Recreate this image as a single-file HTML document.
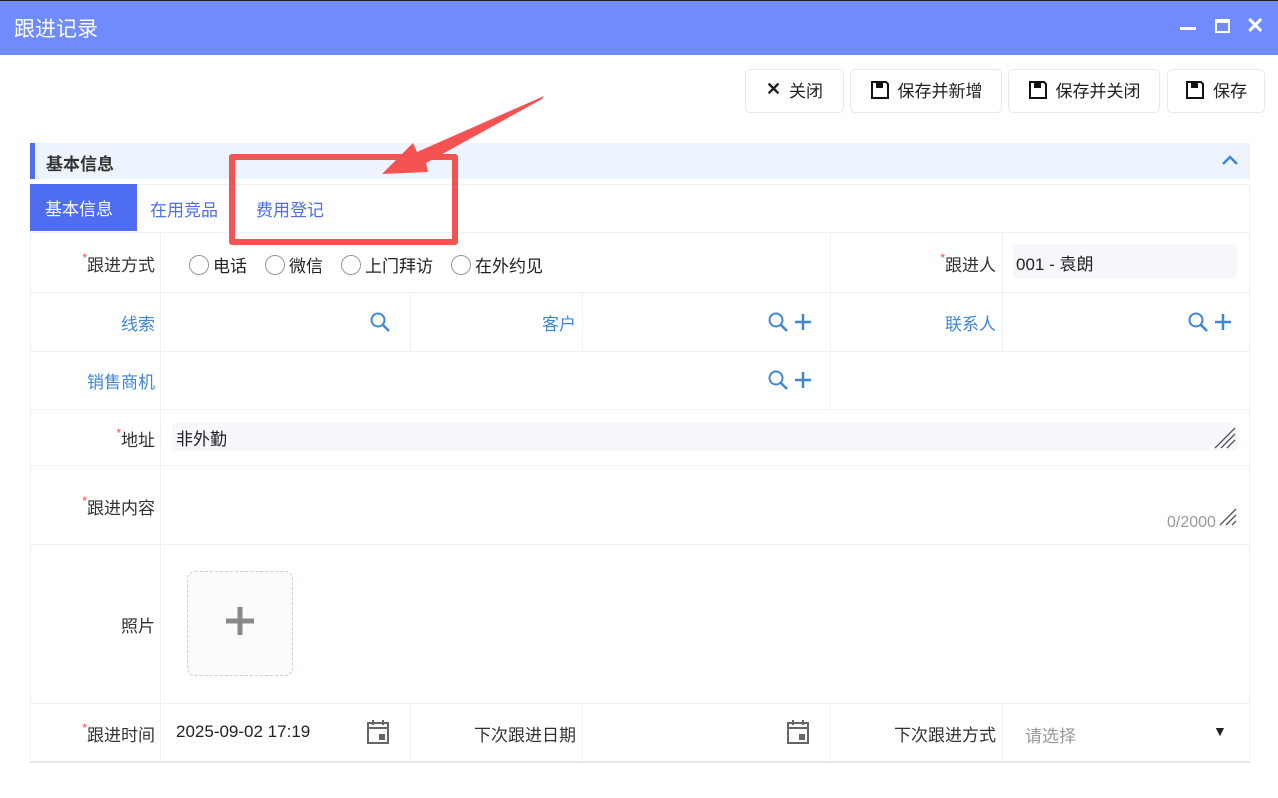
<!DOCTYPE html>
<html><head><meta charset="utf-8"><style>
*{box-sizing:border-box;margin:0;padding:0}
body{width:1278px;height:798px;background:#fff;font-family:"Liberation Sans","Noto Sans CJK SC",sans-serif;position:relative;overflow:hidden;font-size:16px;color:#222}
.abs{position:absolute}
.title{left:0;top:0;width:1278px;height:55px;background:#6f8bfc;border-top:1px solid #222}
.btn{top:69px;height:44px;border:1px solid #e6e9ef;border-radius:5px;display:flex;align-items:center;justify-content:center;gap:8px;font-size:17px;color:#222;padding-bottom:3px}
.lbl{font-size:17px;color:#333;text-align:right}
.blue{color:#3f86d8}
.star{color:#f44;font-size:12px;vertical-align:top}
.hl{background:#eef1f8;height:1px}
.vl{background:#eef1f8;width:1px}
</style></head><body>
<div class="abs title"><div class="abs" style="left:14px;top:12px;color:#fff;font-size:21px">跟进记录</div>
<div class="abs" style="left:1180px;top:26px;width:16px;height:3px;background:#fff"></div>
<div class="abs" style="left:1215px;top:18px;width:15px;height:14px;border:2px solid #fff;border-top-width:4px"></div>
<div class="abs" style="left:1246px;top:12px;color:#fff;font-size:22px;font-weight:bold">✕</div></div>

<div class="abs btn" style="left:745px;width:99px"><b style="font-size:18px">✕</b>关闭</div>
<div class="abs btn" style="left:850px;width:152px"><svg width="20" height="20" viewBox="0 0 20 20"><path d="M2 2h14l2 2v14H2z" fill="none" stroke="#111" stroke-width="2"/><rect x="6" y="2" width="7" height="6" fill="#111"/></svg>保存并新增</div>
<div class="abs btn" style="left:1008px;width:152px"><svg width="20" height="20" viewBox="0 0 20 20"><path d="M2 2h14l2 2v14H2z" fill="none" stroke="#111" stroke-width="2"/><rect x="6" y="2" width="7" height="6" fill="#111"/></svg>保存并关闭</div>
<div class="abs btn" style="left:1167px;width:98px"><svg width="20" height="20" viewBox="0 0 20 20"><path d="M2 2h14l2 2v14H2z" fill="none" stroke="#111" stroke-width="2"/><rect x="6" y="2" width="7" height="6" fill="#111"/></svg>保存</div>

<div class="abs" style="left:30px;top:143px;width:1220px;height:36px;background:#eef4fe;border-left:5px solid #4f6ef0"></div>
<div class="abs" style="left:46px;top:150px;font-weight:bold;font-size:17px;color:#333">基本信息</div>
<svg class="abs" style="left:1220px;top:153px" width="20" height="14"><path d="M3 11l7-7 7 7" fill="none" stroke="#3f86d8" stroke-width="2.5"/></svg>

<div class="abs" style="left:30px;top:184px;width:1220px;height:579px;border:1px solid #eef1f8;border-bottom:2px solid #e3e6ec"></div>
<div class="abs" style="left:30px;top:184px;width:107px;height:47px;background:#4e6df0;color:#fff;font-size:17px;padding:11px 0 0 15px">基本信息</div>
<div class="abs" style="left:150px;top:196px;color:#4e6df0;font-size:17px">在用竞品</div>
<div class="abs" style="left:256px;top:196px;color:#4e6df0;font-size:17px">费用登记</div>

<div class="abs hl" style="left:30px;top:232px;width:1220px"></div>
<div class="abs hl" style="left:30px;top:292px;width:1220px"></div>
<div class="abs hl" style="left:30px;top:351px;width:1220px"></div>
<div class="abs hl" style="left:30px;top:409px;width:1220px"></div>
<div class="abs hl" style="left:30px;top:465px;width:1220px"></div>
<div class="abs hl" style="left:30px;top:544px;width:1220px"></div>
<div class="abs hl" style="left:30px;top:703px;width:1220px"></div>
<div class="abs vl" style="left:160px;top:232px;height:530px"></div>
<div class="abs vl" style="left:830px;top:232px;height:177px"></div>
<div class="abs vl" style="left:1002px;top:232px;height:119px"></div>
<div class="abs vl" style="left:410px;top:292px;height:59px"></div>
<div class="abs vl" style="left:582px;top:292px;height:59px"></div>
<div class="abs vl" style="left:410px;top:703px;height:59px"></div>
<div class="abs vl" style="left:582px;top:703px;height:59px"></div>
<div class="abs vl" style="left:830px;top:703px;height:59px"></div>
<div class="abs vl" style="left:1002px;top:703px;height:59px"></div>

<div class="abs lbl" style="left:30px;top:251px;width:125px"><span class="star">*</span>跟进方式</div>
<div class="abs" style="left:189px;top:252px;display:flex;gap:4px;font-size:17px;align-items:center">
<span style="width:20px;height:20px;border:1px solid #999;border-radius:50%"></span>电话<span style="width:20px;height:20px;border:1px solid #999;border-radius:50%;margin-left:14px"></span>微信<span style="width:20px;height:20px;border:1px solid #999;border-radius:50%;margin-left:14px"></span>上门拜访<span style="width:20px;height:20px;border:1px solid #999;border-radius:50%;margin-left:14px"></span>在外约见</div>
<div class="abs lbl" style="left:830px;top:251px;width:166px"><span class="star">*</span>跟进人</div>
<div class="abs" style="left:1013px;top:244px;width:224px;height:35px;background:#f6f7fb;border-radius:5px;padding:6px 0 0 3px;font-size:17px">001 - 袁朗</div>

<div class="abs lbl blue" style="left:30px;top:310px;width:125px">线索</div>
<div class="abs lbl blue" style="left:410px;top:310px;width:166px">客户</div>
<div class="abs lbl blue" style="left:830px;top:310px;width:166px">联系人</div>
<div class="abs lbl blue" style="left:30px;top:368px;width:125px">销售商机</div>
<svg class="abs" style="left:369px;top:311px" width="22" height="22"><circle cx="9" cy="9" r="6.5" fill="none" stroke="#3f86d8" stroke-width="2"/><path d="M14 14l6 6" stroke="#3f86d8" stroke-width="2.5"/></svg>
<svg class="abs" style="left:767px;top:311px" width="46" height="22"><circle cx="9" cy="9" r="6.5" fill="none" stroke="#3f86d8" stroke-width="2"/><path d="M14 14l6 6M36 3v16M28 11h16" stroke="#3f86d8" stroke-width="2.5"/></svg>
<svg class="abs" style="left:1187px;top:311px" width="46" height="22"><circle cx="9" cy="9" r="6.5" fill="none" stroke="#3f86d8" stroke-width="2"/><path d="M14 14l6 6M36 3v16M28 11h16" stroke="#3f86d8" stroke-width="2.5"/></svg>
<svg class="abs" style="left:767px;top:369px" width="46" height="22"><circle cx="9" cy="9" r="6.5" fill="none" stroke="#3f86d8" stroke-width="2"/><path d="M14 14l6 6M36 3v16M28 11h16" stroke="#3f86d8" stroke-width="2.5"/></svg>

<div class="abs lbl" style="left:30px;top:426px;width:125px"><span class="star">*</span>地址</div>
<div class="abs" style="left:172px;top:423px;width:1066px;height:28px;background:#f6f7fb;border-radius:5px;padding:2px 0 0 4px;font-size:17px">非外勤</div>
<svg class="abs" style="left:1213px;top:426px" width="24" height="24"><path d="M2 22L22 2M8 22L22 8M14 22L22 14" stroke="#555" stroke-width="1.3"/></svg>

<div class="abs lbl" style="left:30px;top:494px;width:125px"><span class="star">*</span>跟进内容</div>
<div class="abs" style="left:1167px;top:514px;color:#999;font-size:16px">0/2000</div>
<svg class="abs" style="left:1218px;top:505px" width="20" height="22"><path d="M2 20L18 4M8 20L18 10M14 20L18 16" stroke="#555" stroke-width="1.3"/></svg>

<div class="abs lbl" style="left:30px;top:612px;width:125px">照片</div>
<div class="abs" style="left:187px;top:571px;width:106px;height:105px;border:1px dashed #ccd;border-radius:8px;background:#fafbfd"></div>
<svg class="abs" style="left:224px;top:605px" width="32" height="32"><path d="M16 2v28M2 16h28" stroke="#888" stroke-width="5"/></svg>

<div class="abs lbl" style="left:30px;top:721px;width:125px"><span class="star">*</span>跟进时间</div>
<div class="abs" style="left:176px;top:722px;font-size:17px">2025-09-02 17:19</div>
<svg class="abs" style="left:366px;top:719px" width="24" height="26"><rect x="2" y="4" width="20" height="20" fill="none" stroke="#666" stroke-width="2"/><path d="M2 9h20M7 1v5M17 1v5" stroke="#666" stroke-width="2"/><rect x="13" y="15" width="6" height="6" fill="#666"/></svg>
<div class="abs lbl" style="left:410px;top:721px;width:166px">下次跟进日期</div>
<svg class="abs" style="left:786px;top:719px" width="24" height="26"><rect x="2" y="4" width="20" height="20" fill="none" stroke="#666" stroke-width="2"/><path d="M2 9h20M7 1v5M17 1v5" stroke="#666" stroke-width="2"/><rect x="13" y="15" width="6" height="6" fill="#666"/></svg>
<div class="abs lbl" style="left:830px;top:721px;width:166px">下次跟进方式</div>
<div class="abs" style="left:1025px;top:722px;color:#999;font-size:17px">请选择</div>
<div class="abs" style="left:1213px;top:723px;font-size:14px;color:#222">▼</div>

<div class="abs" style="left:229px;top:154px;width:229px;height:91px;border:6px solid #f55252;border-radius:3px"></div>
<svg class="abs" style="left:370px;top:90px" width="180" height="100"><path d="M174 6L172 9L56 73L58 82L12 84L43 53L47 62Z" fill="#f55252"/></svg>
</body></html>
